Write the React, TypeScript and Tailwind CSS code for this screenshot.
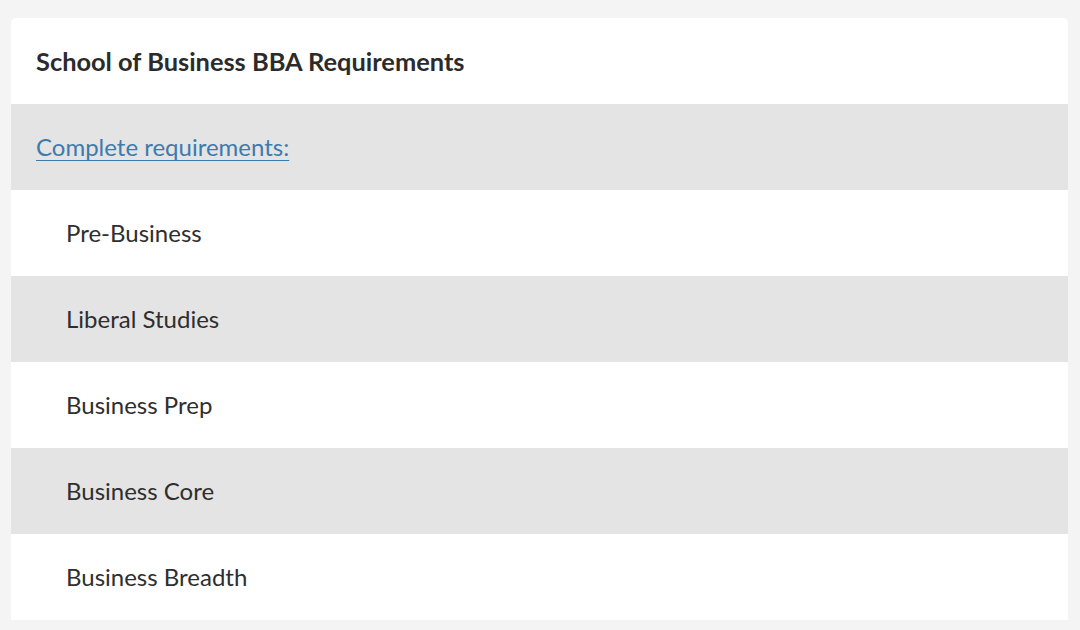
export default function App() {
  const items = ['Pre-Business', 'Liberal Studies', 'Business Prep', 'Business Core', 'Business Breadth'];
  return (
    <div className="min-h-[630px] w-full bg-[#f4f4f4] pt-[18px] pl-[11px] pr-[12px] pb-[10px]" style={{ fontFamily: 'Lato, "Open Sans", sans-serif' }}>
      <div className="overflow-hidden rounded-t-[5px] bg-white">
        <div className="flex h-[86px] items-center px-[25px]">
          <h2 className="text-[25.4px] font-bold text-[#2b2b2b]">School of Business BBA Requirements</h2>
        </div>
        <div className="flex h-[86px] items-center bg-[#e4e4e4] px-[25px]">
          <a href="#" className="text-[24px] text-[#3d7bad] underline underline-offset-[4px] decoration-1">
            Complete requirements:
          </a>
        </div>
        {items.map((item, i) => (
          <div
            key={item}
            className={`flex h-[86px] items-center pl-[55px] ${i % 2 === 1 ? 'bg-[#e4e4e4]' : 'bg-white'}`}
          >
            <span className="text-[24px] text-[#2e2e2e]">{item}</span>
          </div>
        ))}
      </div>
    </div>
  );
}
